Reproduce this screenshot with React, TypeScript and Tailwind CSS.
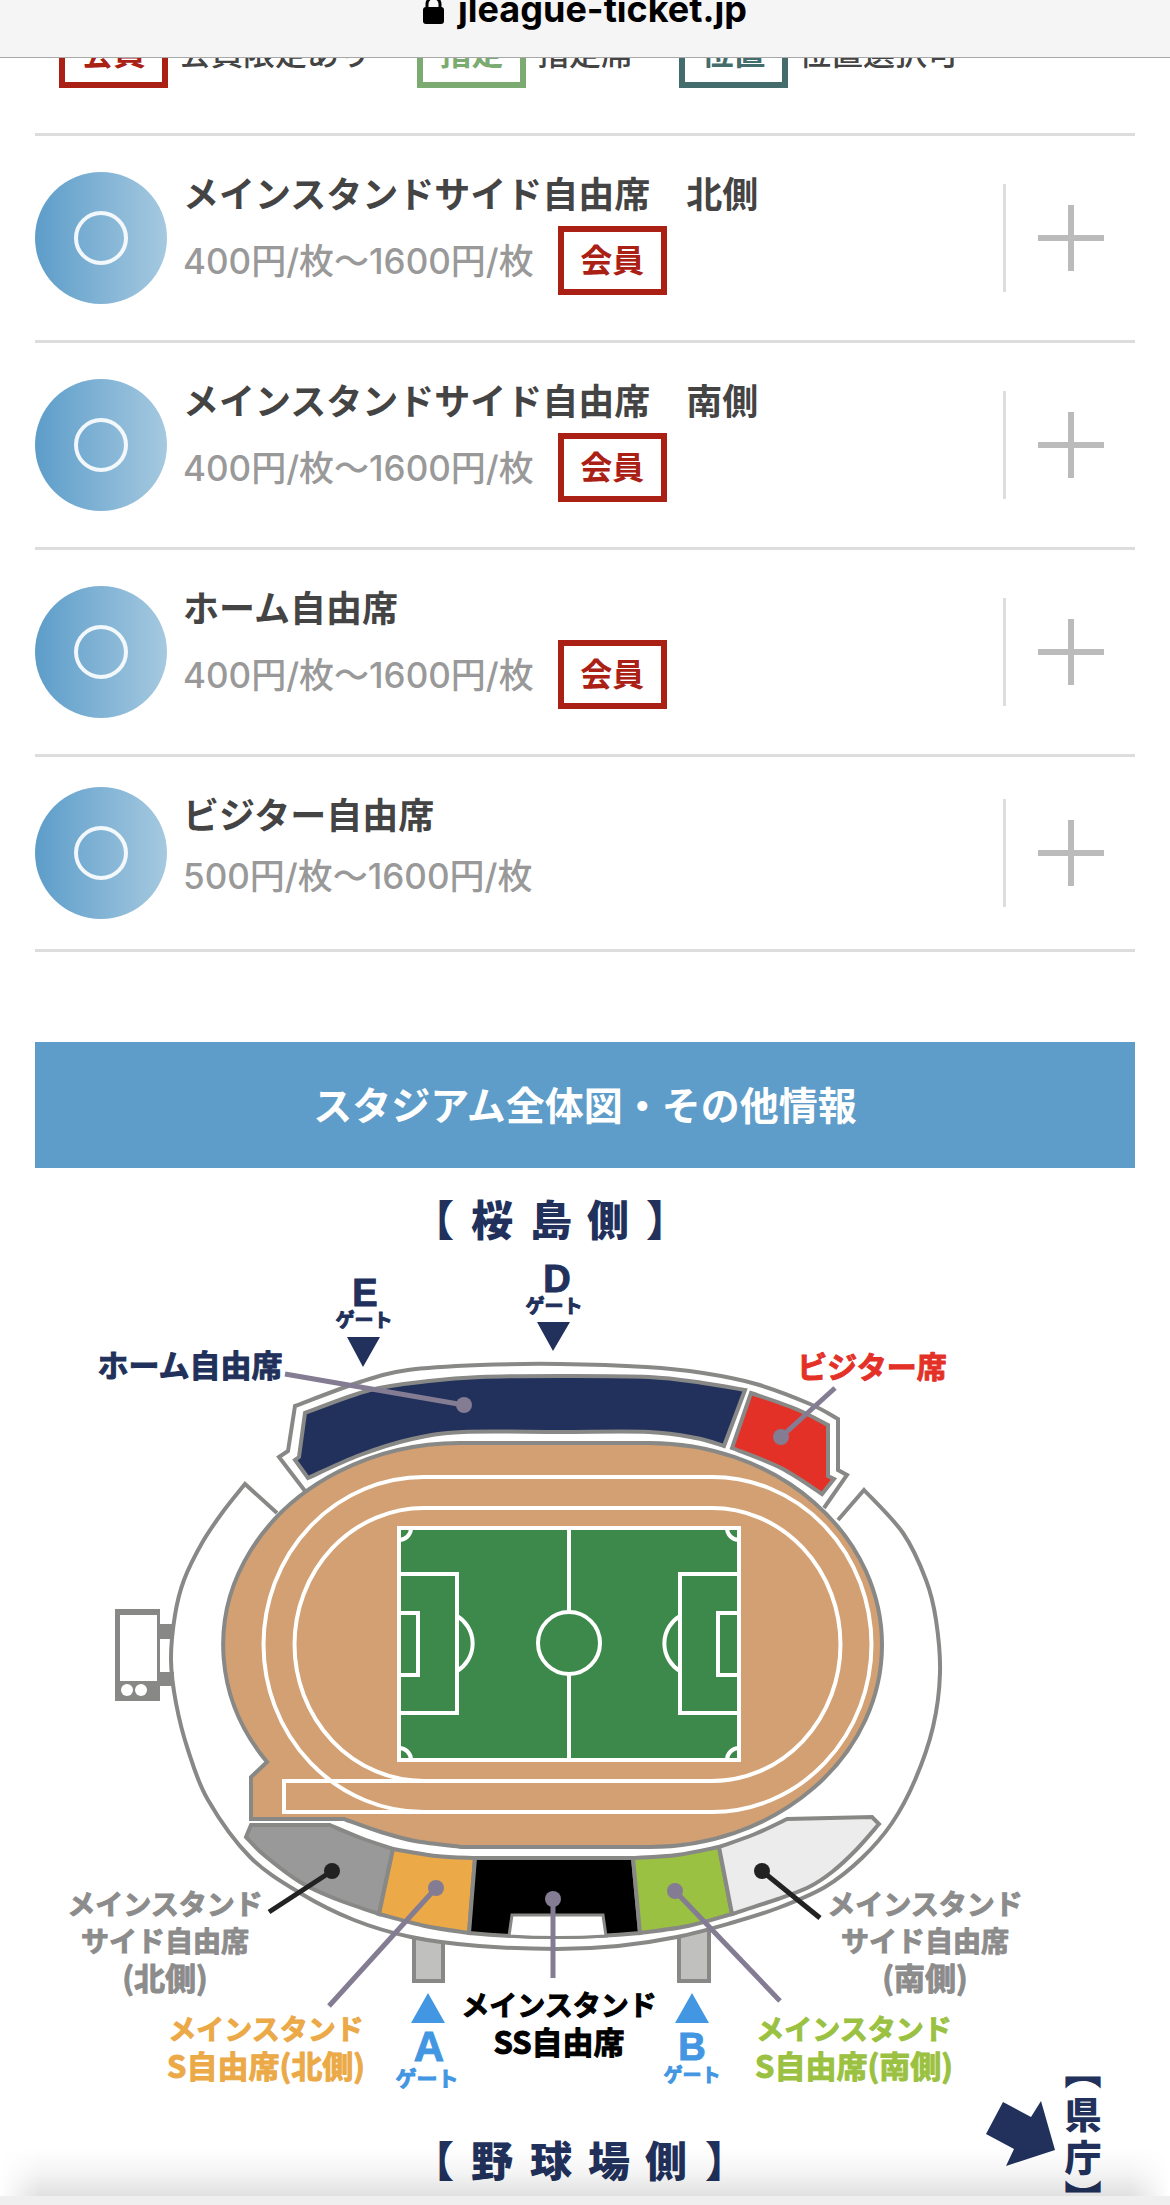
import { type ReactNode } from 'react'

type Point = [number, number]

interface Seat {
  name: string
  price: string
  members?: boolean
}

const seats: Seat[] = [
  { name: 'メインスタンドサイド自由席　北側', price: '400円/枚〜1600円/枚', members: true },
  { name: 'メインスタンドサイド自由席　南側', price: '400円/枚〜1600円/枚', members: true },
  { name: 'ホーム自由席', price: '400円/枚〜1600円/枚', members: true },
  { name: 'ビジター自由席', price: '500円/枚〜1600円/枚' },
]

const NAVY = '#21315b'
const LINE = '#888886'
const LEADER = '#837c92'
const GATE_BLUE = '#4296e2'

/** Catmull-Rom spline through the points, as cubic segments (no leading M). */
function curve(pts: Point[]): string {
  return pts
    .slice(1)
    .map((p, i) => {
      const a = pts[Math.max(i - 1, 0)]
      const b = pts[i]
      const d = pts[Math.min(i + 2, pts.length - 1)]
      const c1 = [b[0] + (p[0] - a[0]) / 6, b[1] + (p[1] - a[1]) / 6]
      const c2 = [p[0] - (d[0] - b[0]) / 6, p[1] - (d[1] - b[1]) / 6]
      return `C${c1.join(' ')} ${c2.join(' ')} ${p.join(' ')}`
    })
    .join('')
}

function Badge({ children, className }: { children: ReactNode; className: string }) {
  return (
    <span
      className={`flex h-[69px] w-[109px] shrink-0 items-center justify-center border-6 text-[32px] leading-none font-bold ${className}`}
    >
      {children}
    </span>
  )
}

function SeatRow({ seat }: { seat: Seat }) {
  return (
    <li className="flex items-center gap-4 border-b-3 border-[#ddd]">
      <span className="flex size-[132px] shrink-0 items-center justify-center rounded-full bg-linear-to-r from-[#5c9dc9] to-[#a5c9e0]">
        <span className="size-[54px] rounded-full border-4 border-white/90" />
      </span>
      <div className="grow pt-[41px] pb-[45px]">
        <h3 className="text-[36px] leading-9 font-bold text-[#444]">{seat.name}</h3>
        <div className="mt-[13px] flex min-h-[57px] items-center gap-6">
          <span className="text-[35px] leading-9 font-medium text-[#999]">{seat.price}</span>
          {seat.members && <Badge className="border-[#ab2014] text-[#ab2014]">会員</Badge>}
        </div>
      </div>
      <button
        type="button"
        aria-label={`${seat.name}を開く`}
        className="flex h-[108px] w-[132px] shrink-0 items-center justify-center border-l-3 border-[#ddd]"
      >
        <svg viewBox="0 0 66 66" className="size-[66px]" stroke="#bbb" strokeWidth="6">
          <path d="M33 0V66M0 33H66" />
        </svg>
      </button>
    </li>
  )
}

function Label({ x, y, size, fill, children }: { x: number; y: number; size: number; fill: string; children: string }) {
  return (
    <text
      x={x}
      y={y + Math.round(size * 0.37)}
      fontSize={size}
      fill={fill}
      stroke={fill}
      strokeWidth="1"
      strokeLinejoin="round"
      fontWeight="700"
      textAnchor="middle"
    >
      {children}
    </text>
  )
}

function Leader({ from, to, color = LEADER }: { from: Point; to: Point; color?: string }) {
  return (
    <g>
      <path d={`M${from.join(' ')}L${to.join(' ')}`} stroke={color} strokeWidth="5" />
      <circle cx={from[0]} cy={from[1]} r="8" fill={color} />
    </g>
  )
}

function Gate({ x, y, size, letter, fill }: { x: number; y: number; size: number; letter: string; fill: string }) {
  return (
    <text
      x={x}
      y={y}
      fontSize={size}
      fill={fill}
      stroke={fill}
      strokeWidth="1"
      fontWeight="700"
      textAnchor="middle"
      className="font-['Liberation_Sans',sans-serif]"
    >
      {letter}
    </text>
  )
}

function Field() {
  return (
    <g fill="none" stroke="#fff" strokeWidth="4">
      <rect x="399" y="1528" width="340" height="232" fill="#3d884b" />
      <path d="M569 1528V1612M569 1674V1760" />
      <circle cx="569" cy="1643" r="31" />
      {/* penalty and goal areas */}
      <path d="M399 1574H457V1713H399M399 1613H418V1675H399M457 1616A32 32 0 0 1 457 1671" />
      <path d="M739 1574H680V1713H739M739 1613H718V1675H739M680 1616A32 32 0 0 0 680 1671" />
      {/* corners */}
      <path d="M411 1528A12 12 0 0 1 399 1540M727 1528A12 12 0 0 0 739 1540" />
      <path d="M411 1760A12 12 0 0 0 399 1748M727 1760A12 12 0 0 1 739 1748" />
    </g>
  )
}

function StadiumMap() {
  const bowl = curve([
    [245, 1484], [222, 1513], [202, 1543], [184, 1580], [175, 1615], [171, 1660], [176, 1703], [188, 1750],
    [208, 1800], [250, 1857], [300, 1893], [354, 1920], [411, 1937], [479, 1946], [557, 1949], [618, 1946],
    [677, 1937], [731, 1923], [778, 1908], [825, 1887], [862, 1858], [892, 1823], [915, 1780], [933, 1727],
    [940, 1673], [936, 1620], [926, 1580], [903, 1533], [864, 1490],
  ])
  const roof = curve([[295, 1406], [360, 1382], [408, 1370], [480, 1365], [560, 1364], [646, 1367], [703, 1373], [756, 1384], [810, 1404], [838, 1419]])
  const homeTop = curve([[305, 1413], [370, 1390], [429, 1381], [480, 1377], [560, 1376], [649, 1377], [703, 1383], [745, 1390]])
  const homeBottom = curve([[724, 1446], [696, 1438], [649, 1432], [560, 1432], [463, 1432], [412, 1439], [360, 1455], [308, 1478]])

  return (
    <svg
      viewBox="35 1168 1100 1037"
      fill="none"
      className="block w-full font-['Noto_Sans_CJK_JP',sans-serif]"
      role="img"
      aria-label="スタジアム全体図"
    >
      {/* gate bridges */}
      <g fill="#c0c0be" stroke={LINE} strokeWidth="4">
        <rect x="414" y="1930" width="29" height="51" />
        <rect x="679" y="1930" width="30" height="51" />
      </g>

      {/* outer bowl */}
      <path d={`M277 1513L245 1484${bowl}L838 1520Z`} fill="#fff" />
      <path d={`M277 1513L245 1484${bowl}L838 1520`} stroke={LINE} strokeWidth="4" />

      {/* scoreboard */}
      <path d="M115 1609H160V1624H174V1639H160V1672H174V1686H160V1701H115Z" fill={LINE} />
      <path d="M120 1615H157V1681H120Z" fill="#fff" />
      <circle cx="127" cy="1690" r="6" fill="#fff" />
      <circle cx="141" cy="1690" r="6" fill="#fff" />

      {/* back stand */}
      <path
        d={`M305 1491L279 1457L288 1451L295 1406${roof}L838 1470L847 1475L824 1508`}
        fill="#fff"
        stroke={LINE}
        strokeWidth="4"
      />
      <path
        d={`M305 1413${homeTop}L724 1446${homeBottom}L295 1460L299 1457Z`}
        fill={NAVY}
        stroke={LINE}
        strokeWidth="4"
      />
      <path
        d={`M751 1393${curve([[751, 1393], [796, 1409], [828, 1425]])}V1476L834 1479L822 1494${curve([[822, 1494], [781, 1468], [732, 1448]])}Z`}
        fill="#e33128"
        stroke={LINE}
        strokeWidth="4"
      />

      {/* running track */}
      <path
        d={`M463 1443H649A233 202 0 0 1 649 1847H463${curve([[463, 1847], [415, 1841], [381, 1832], [344, 1819]])}H251V1777L267 1762A237 202 0 0 1 463 1443Z`}
        fill="#d2a072"
        stroke={LINE}
        strokeWidth="4"
      />
      <g stroke="#fff" strokeWidth="4">
        <path d="M424 1477H712A159 167 0 0 1 712 1812H424A160 167 0 0 1 424 1477Z" />
        <path d="M424 1508H712A128 136 0 0 1 712 1781H424A129 136 0 0 1 424 1508Z" />
        <path d="M424 1781H284V1812H424" />
      </g>
      <Field />

      {/* main stand */}
      <g stroke={LINE} strokeWidth="4">
        <path
          d={`M251 1825H330${curve([[330, 1825], [361, 1838], [393, 1849]])}L379 1914${curve([[379, 1914], [336, 1899], [300, 1882], [264, 1855], [246, 1837]])}Z`}
          fill="#999"
        />
        <path
          d={`M393 1849${curve([[393, 1849], [436, 1856], [475, 1858]])}L469 1933${curve([[469, 1933], [425, 1926], [379, 1914]])}Z`}
          fill="#eba947"
        />
        <path d="M475 1858H633L640 1933Q555 1941 469 1933Z" fill="#000" />
        <path d="M512 1915H603L606 1936Q558 1939 509 1936Z" fill="#fff" strokeWidth="3" />
        <path
          d={`M633 1858${curve([[633, 1858], [677, 1855], [719, 1847]])}L732 1914${curve([[732, 1914], [688, 1926], [640, 1933]])}Z`}
          fill="#9ac141"
        />
        <path
          d={`M719 1847${curve([[719, 1847], [755, 1834], [787, 1819]])}L872 1817L879 1824${curve([[879, 1824], [856, 1850], [832, 1872], [809, 1887], [778, 1899], [732, 1914]])}Z`}
          fill="#ececec"
        />
      </g>

      <Leader from={[464, 1405]} to={[285, 1374]} />
      <Leader from={[781, 1437]} to={[835, 1388]} />
      <Leader from={[332, 1871]} to={[269, 1912]} color="#222" />
      <Leader from={[436, 1888]} to={[329, 2006]} />
      <Leader from={[553, 1899]} to={[553, 1978]} />
      <Leader from={[675, 1891]} to={[780, 2001]} />
      <Leader from={[762, 1871]} to={[820, 1918]} color="#222" />

      {/* directions */}
      <g fill={NAVY} fontWeight="900">
        <text fontSize="42" x="412 471 530 587 646" y="1236">
          【桜島側】
        </text>
        <text fontSize="42" x="412 471 530 588 645 705" y="2177">
          【野球場側】
        </text>
        <text fontSize="37" x="1083" y="2052 2096 2139 2180" className="[writing-mode:vertical-rl]">
          【県庁】
        </text>
        <path d="M1003 2102L1031 2117L1041 2101L1055 2150L1006 2166L1014 2149L986 2134Z" />
      </g>

      {/* gates */}
      <path d="M347 1337H380L363 1367ZM537 1322H570L553 1351Z" fill={NAVY} />
      <path d="M411 2023H445L428 1993ZM675 2023H709L692 1993Z" fill={GATE_BLUE} />
      <Gate x={365} y={1306} size={38} letter="E" fill={NAVY} />
      <Gate x={557} y={1292} size={38} letter="D" fill={NAVY} />
      <Gate x={429} y={2061} size={42} letter="A" fill={GATE_BLUE} />
      <Gate x={692} y={2060} size={38} letter="B" fill={GATE_BLUE} />
      <Label x={364} y={1320} size={19} fill={NAVY}>ゲート</Label>
      <Label x={554} y={1306} size={19} fill={NAVY}>ゲート</Label>
      <Label x={427} y={2078} size={21} fill={GATE_BLUE}>ゲート</Label>
      <Label x={692} y={2075} size={19} fill={GATE_BLUE}>ゲート</Label>

      {/* seat names */}
      <Label x={190} y={1366} size={31} fill={NAVY}>ホーム自由席</Label>
      <Label x={872} y={1367} size={30} fill="#e33128">ビジター席</Label>
      <Label x={165} y={1905} size={28} fill="#8c8c8c">メインスタンド</Label>
      <Label x={165} y={1942} size={28} fill="#8c8c8c">サイド自由席</Label>
      <Label x={165} y={1979} size={31} fill="#8c8c8c">(北側)</Label>
      <Label x={925} y={1905} size={28} fill="#8c8c8c">メインスタンド</Label>
      <Label x={925} y={1942} size={28} fill="#8c8c8c">サイド自由席</Label>
      <Label x={925} y={1979} size={31} fill="#8c8c8c">(南側)</Label>
      <Label x={266} y={2030} size={28} fill="#eba947">メインスタンド</Label>
      <Label x={266} y={2067} size={31} fill="#eba947">S自由席(北側)</Label>
      <Label x={559} y={2006} size={28} fill="#000">メインスタンド</Label>
      <Label x={559} y={2043} size={31} fill="#000">SS自由席</Label>
      <Label x={854} y={2030} size={28} fill="#9ac141">メインスタンド</Label>
      <Label x={854} y={2067} size={31} fill="#9ac141">S自由席(南側)</Label>
    </svg>
  )
}

export default function App() {
  return (
    <div className="relative overflow-hidden bg-white font-[Inter,'Noto_Sans_CJK_JP',sans-serif]">
      {/* collapsed address bar */}
      <header className="absolute inset-x-0 top-0 z-10 flex h-[58px] items-start justify-center overflow-hidden border-b border-[#a8a8a8] bg-[#f5f5f6]">
        <div className="-mt-[11px] flex items-center gap-[14px] text-black">
          <svg viewBox="0 0 21 32" className="h-8 w-[21px]">
            <path d="M4 17V11a6.500 6.500 0 0 1 13 0V17" fill="none" stroke="currentColor" strokeWidth="3" />
            <rect y="14" width="21" height="17" rx="3" fill="currentColor" />
          </svg>
          <span className="text-[36px] leading-10 font-bold">jleague-ticket.jp</span>
        </div>
      </header>

      <main className="px-[35px] pt-[19px]">
        <div className="flex items-center gap-[46px] border-b-3 border-[#ddd] pb-[45px] pl-6 text-[32px] leading-none font-medium text-[#444]">
          <span className="flex items-center gap-[11px]">
            <Badge className="border-[#ab2014] text-[#ab2014]">会員</Badge>会員限定あり
          </span>
          <span className="flex items-center gap-[11px]">
            <Badge className="border-[#7cab72] text-[#7cab72]">指定</Badge>指定席
          </span>
          <span className="flex items-center gap-[11px]">
            <Badge className="border-[#446c6d] text-[#446c6d]">位置</Badge>位置選択可
          </span>
        </div>

        <ul>
          {seats.map((seat) => (
            <SeatRow key={seat.name} seat={seat} />
          ))}
        </ul>

        <h2 className="mt-[90px] flex h-[126px] items-center justify-center bg-[#5e9dc9] text-[39px] leading-none font-bold text-white">
          スタジアム全体図・その他情報
        </h2>
        <StadiumMap />
      </main>

      {/* toolbar edge with its shadow */}
      <div className="absolute inset-x-0 bottom-0">
        <div className="h-12 bg-linear-to-b from-transparent via-black/4 to-black/12 [mask-image:linear-gradient(to_right,transparent,black_40px,black_calc(100%-40px),transparent)]" />
        <div className="h-[9px] bg-[#efefef]" />
      </div>
    </div>
  )
}
